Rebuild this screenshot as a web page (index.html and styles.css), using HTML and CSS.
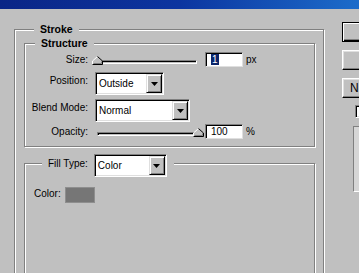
FILE: index.html
```html
<!DOCTYPE html>
<html lang="en">
<head>
  <meta charset="UTF-8" />
  <title>Layer Style - Stroke</title>
  <link rel="stylesheet" href="styles.css">
</head>
<body>
  <div class="titlebar"></div>

  <div class="dialog">
    <fieldset class="group stroke">
      <legend>Stroke</legend>

      <fieldset class="group structure">
        <legend>Structure</legend>

        <div class="row">
          <label class="lbl">Size:</label>
          <div class="slider">
            <div class="track"></div>
            <svg class="thumb" style="left:0px" width="11" height="9" viewBox="0 0 11 9">
              <polygon points="5.5,0.5 10.5,5 10.5,8.5 0.5,8.5 0.5,5" fill="#c0c0c0" />
              <polyline points="0.5,8.5 0.5,5 5.5,0.5" fill="none" stroke="#fff" />
              <polyline points="5.5,0.5 10.5,5 10.5,8.5 0.5,8.5" fill="none" stroke="#000" />
              <polyline points="9.5,5.5 9.5,7.5 1.5,7.5" fill="none" stroke="#808080" />
            </svg>
          </div>
          <span class="field"><span class="sel">1</span></span>
          <span class="unit">px</span>
        </div>

        <div class="row row-combo row-position">
          <label class="lbl">Position:</label>
          <div class="combo combo-position">
            <span class="value">Outside</span>
            <span class="drop"><svg width="7" height="4" viewBox="0 0 7 4"><polygon points="0,0 7,0 3.5,4" fill="#000" /></svg></span>
          </div>
        </div>

        <div class="row row-combo row-blend">
          <label class="lbl">Blend Mode:</label>
          <div class="combo combo-blend">
            <span class="value">Normal</span>
            <span class="drop"><svg width="7" height="4" viewBox="0 0 7 4"><polygon points="0,0 7,0 3.5,4" fill="#000" /></svg></span>
          </div>
        </div>

        <div class="row row-opacity">
          <label class="lbl">Opacity:</label>
          <div class="slider">
            <div class="track"></div>
            <svg class="thumb" style="left:101px" width="11" height="9" viewBox="0 0 11 9">
              <polygon points="5.5,0.5 10.5,5 10.5,8.5 0.5,8.5 0.5,5" fill="#c0c0c0" />
              <polyline points="0.5,8.5 0.5,5 5.5,0.5" fill="none" stroke="#fff" />
              <polyline points="5.5,0.5 10.5,5 10.5,8.5 0.5,8.5" fill="none" stroke="#000" />
              <polyline points="9.5,5.5 9.5,7.5 1.5,7.5" fill="none" stroke="#808080" />
            </svg>
          </div>
          <span class="field">100</span>
          <span class="unit">%</span>
        </div>
      </fieldset>

      <fieldset class="group fill">
        <legend>
          <label class="fill-lbl">Fill Type:</label>
          <div class="combo combo-fill">
            <span class="value">Color</span>
            <span class="drop"><svg width="7" height="4" viewBox="0 0 7 4"><polygon points="0,0 7,0 3.5,4" fill="#000" /></svg></span>
          </div>
        </legend>

        <div class="color-row">
          <span class="color-lbl">Color:</span>
          <span class="swatch"></span>
        </div>
      </fieldset>
    </fieldset>

    <div class="side">
      <div class="btn default"></div>
      <div class="btn"></div>
      <div class="btn">N</div>
      <div class="check"></div>
      <div class="preview"></div>
    </div>
  </div>
</body>
</html>
```

FILE: styles.css
```css
* { box-sizing: border-box; }
html, body { margin: 0; overflow: hidden; }
body { width: 359px; height: 273px; background: #c0c0c0; color: #000; font: 10px "Liberation Sans", Arial, sans-serif; }

.titlebar { height: 9px; background: linear-gradient(to right, #0a2586 0%, #0c35a0 50%, #1c6cca 100%); }

.dialog { display: flex; align-items: flex-start; height: 264px; overflow: hidden; }

/* etched group boxes */
.group { margin: 0; padding: 0; min-width: 0; border: 1px solid #808080; box-shadow: inset 1px 1px 0 #fff, 1px 1px 0 #fff; }
.group > legend { margin-left: 10px; padding: 0 6px; height: 13px; line-height: 13px; font-size: 10.5px; font-weight: bold; background: #c0c0c0; }

.stroke { flex-shrink: 0; width: 310px; height: 300px; margin: 14px 0 0 14px; padding: 0 8px 0 9px; }
.structure { margin-top: 1px; padding: 2px 0 7px; }
.fill { margin-top: 7px; padding: 0 0 0 9px; height: 200px; }
.fill > legend { display: flex; margin-left: 8px; padding: 0 7px 0 6px; height: 19px; line-height: 19px; font-size: 10px; font-weight: normal; }

/* rows */
.row { display: flex; align-items: flex-start; height: 15px; }
.row-combo { height: 23px; }
.row-position { margin-top: 5px; }
.row-blend { margin-top: 4px; }
.row-opacity { margin-top: 2px; }
.lbl { width: 63px; margin-right: 4px; text-align: right; line-height: 15px; }
.row-combo .lbl { line-height: 17px; margin-right: 7px; }
.unit { margin-left: 3px; line-height: 15px; }

/* sliders */
.slider { position: relative; width: 111px; height: 15px; }
.track { margin: 8px 6px 0 5px; height: 4px; background: #c0c0c0; border: 1px solid; border-color: #808080 #fff #fff #808080; box-shadow: inset 1px 1px 0 #000; }
.thumb { position: absolute; top: 4px; display: block; }

/* edit fields */
.field { width: 38px; height: 15px; margin-left: 2px; padding-left: 5px; background: #fff; border: 1px solid; border-color: #808080 #dfdfdf #dfdfdf #808080; box-shadow: inset 1px 1px 0 #000; line-height: 13px; }
.field .sel { display: inline-block; background: #0a246a; color: #fff; padding: 0 1px; line-height: 11px; }

/* combo boxes */
.combo { display: flex; height: 23px; padding: 1px; background: #fff; border: 1px solid; border-color: #808080 #fff #fff #808080; box-shadow: inset 1px 1px 0 #000, inset -1px -1px 0 #dfdfdf; }
.combo-position { width: 69px; }
.combo-blend { width: 95px; }
.combo-fill { width: 73px; margin-left: 6px; }
.combo .value { flex: 1; padding-left: 2px; line-height: 19px; }
.drop { display: flex; align-items: center; justify-content: center; width: 16px; height: 19px; background: #c0c0c0; border: 1px solid; border-color: #dfdfdf #000 #000 #dfdfdf; box-shadow: inset 1px 1px 0 #fff, inset -1px -1px 0 #808080; }
.drop svg { display: block; }

.color-row { display: flex; align-items: flex-start; margin-top: 14px; }
.color-lbl { line-height: 13px; margin-right: 4px; }
.swatch { width: 30px; height: 16px; background: #767676; border: 1px solid #8e8e8e; }

/* right-hand column */
.side { flex-shrink: 0; width: 80px; margin: 13px 0 0 18px; }
.btn { height: 20px; margin-bottom: 8px; padding-left: 7px; background: #c0c0c0; border: 1px solid; border-color: #fff #000 #000 #fff; box-shadow: inset -1px -1px 0 #808080, inset 1px 1px 0 #dfdfdf; font-size: 12px; line-height: 18px; }
.btn.default { border-color: #000; box-shadow: inset 1px 1px 0 #fff, inset -1px -1px 0 #000, inset -2px -2px 0 #808080; }
.btn:nth-child(3) { margin-bottom: 7px; }
.check { width: 13px; height: 13px; margin: 0 0 8px 13px; background: #fff; border: 1px solid; border-color: #808080 #fff #fff #808080; box-shadow: inset 1px 1px 0 #000, inset -1px -1px 0 #dfdfdf; }
.preview { height: 66px; margin-left: 11px; background: #d6d6d6; border: 1px solid; border-color: #808080 #fff #fff #808080; }
```
